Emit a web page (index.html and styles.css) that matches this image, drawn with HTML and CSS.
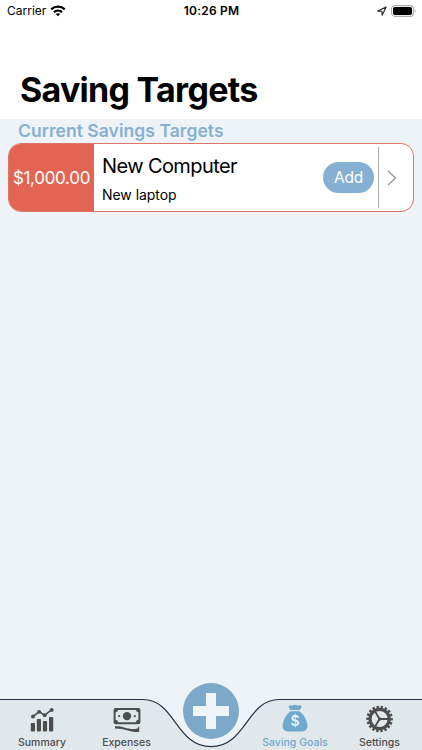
FILE: index.html
```html
<!DOCTYPE html>
<html lang="en">
<head>
  <meta charset="UTF-8">
  <meta name="viewport" content="width=device-width, initial-scale=1.0">
  <title>Saving Targets</title>
  <link rel="stylesheet" href="styles.css">
</head>
<body>
  <div class="app">
    <!-- Status bar -->
    <div class="status-bar">
      <div class="status-left">
        <span class="carrier">Carrier</span>
        <svg class="wifi" width="16" height="12" viewBox="0 0 16 12" fill="none" stroke="#000" stroke-width="2.2">
          <path d="M1.2 4.4C5 .8 11 .8 14.8 4.4"/>
          <path d="M3.9 7.1C6.2 5 9.8 5 12.1 7.1"/>
          <path d="M8 11.3L5.7 9C7 7.9 9 7.9 10.3 9Z" fill="#000" stroke="none"/>
        </svg>
      </div>
      <span class="time">10:26 PM</span>
      <div class="status-right">
        <svg width="10" height="10" viewBox="0 0 10 10" fill="none" stroke="#222" stroke-width="1.1" stroke-linejoin="round">
          <path d="M.8 5.1L9.1 1L5.2 9.2L4.9 5.2Z"/>
        </svg>
        <svg width="25" height="12" viewBox="0 0 25 12">
          <rect x=".6" y=".6" width="21.8" height="10.8" rx="3.2" fill="#fff" stroke="#aaa" stroke-width="1.1"/>
          <rect x="2" y="2" width="19" height="8" rx="1.8"/>
          <path d="M23.6 4.2C25 4.8 25 7.2 23.6 7.8Z" fill="#999"/>
        </svg>
      </div>
    </div>

    <header class="header">
      <h1>Saving Targets</h1>
    </header>

    <main class="content">
      <h2>Current Savings Targets</h2>
      <div class="card">
        <div class="amount"><span>$1,000.00</span></div>
        <div class="info">
          <span class="name">New Computer</span>
          <span class="note">New laptop</span>
        </div>
        <button class="add"><span>Add</span></button>
        <div class="divider"></div>
        <svg class="chevron" width="10" height="16" viewBox="0 0 10 16" fill="none" stroke="#9a9a9a" stroke-width="1.4">
          <path d="M1 1L8.5 8L1 15"/>
        </svg>
      </div>
    </main>

    <!-- Tab bar -->
    <nav class="tabs">
      <svg class="tabs-bg" width="422" height="52" viewBox="0 0 422 52">
        <path d="M-2 1.5H143C175 1.5 176 48.7 211 48.7S247 1.5 279 1.5H424V54H-2Z" fill="#e1e8eb" stroke="#2e3145" stroke-width="1.2"/>
      </svg>
      <a class="tab">
        <svg width="28" height="28" viewBox="0 0 28 28" fill="#4d4d4d">
          <rect x="2.8" y="18" width="4.2" height="8.4" rx=".8"/>
          <rect x="8.8" y="14" width="4.2" height="12.4" rx=".8"/>
          <rect x="14.9" y="16" width="4.2" height="10.4" rx=".8"/>
          <rect x="21" y="12" width="4.2" height="14.4" rx=".8"/>
          <path d="M5 11.6L11.2 6.6L16.7 10.3L23.6 4.7" fill="none" stroke="#4d4d4d" stroke-width="1.6"/>
          <circle cx="5" cy="11.4" r="2"/>
          <circle cx="11.2" cy="6.8" r="1.9"/>
          <circle cx="16.7" cy="10.2" r="1.9"/>
          <circle cx="23.6" cy="4.9" r="2"/>
        </svg>
        <span>Summary</span>
      </a>
      <a class="tab">
        <svg width="28" height="28" viewBox="0 0 28 28" fill="#4d4d4d">
          <rect x="1.6" y="3.9" width="24.8" height="14.4" rx="1" fill="none" stroke="#4d4d4d" stroke-width="2"/>
          <path d="M2 4H5.4Q5.2 7 2 7.4ZM26 4H22.6Q22.8 7 26 7.4ZM2 18V14.8Q5.2 15 5.4 18ZM26 18V14.8Q22.8 15 22.6 18Z"/>
          <circle cx="14" cy="11.1" r="4.2"/>
          <circle cx="6.2" cy="11.1" r="1.1"/>
          <circle cx="21.8" cy="11.1" r="1.1"/>
          <path d="M2 21.3C11 20.3 15 25.6 24.4 23.4L26.2 20.7V27C17 27.6 13 23.3 2 23.4Z"/>
        </svg>
        <span>Expenses</span>
      </a>
      <a class="tab-add">
        <svg width="56" height="56" viewBox="0 0 56 56">
          <circle cx="28" cy="28" r="28" fill="#7ca8c9"/>
          <path d="M23.6 10H32.4Q33 10 33 10.6V23H45.4Q46 23 46 23.6V32.4Q46 33 45.4 33H33V45.4Q33 46 32.4 46H23.6Q23 46 23 45.4V33H10.6Q10 33 10 32.4V23.6Q10 23 10.6 23H23V10.6Q23 10 23.6 10Z" fill="#eff4f8"/>
        </svg>
      </a>
      <a class="tab active">
        <svg width="28" height="28" viewBox="0 0 28 28" fill="#71a8cd">
          <path d="M7.7 .9Q9 -.2 11 .7Q14 -1 17 .7Q19 -.2 20.7 .9Q20.5 3 18.6 5H9.5Q7.5 3 7.7 .9Z"/>
          <path d="M9.5 6.2H18.5C23 9.5 26.4 16 26.4 21Q26.4 26.4 21 26.4H7Q1.6 26.4 1.6 21C1.6 16 5 9.5 9.5 6.2Z"/>
          <text class="dollar" x="14" y="21.2" text-anchor="middle">$</text>
        </svg>
        <span>Saving Goals</span>
      </a>
      <a class="tab">
        <svg width="28" height="28" viewBox="0 0 28 28" fill="none" stroke="#4d4d4d">
          <!-- teeth: 18 dashes round the rim -->
          <circle cx="13.6" cy="14" r="11.9" pathLength="36" stroke-width="2.8" stroke-dasharray="1.15 .85" stroke-dashoffset=".5"/>
          <circle cx="13.6" cy="14" r="9.6" stroke-width="3.2"/>
          <path d="M13.6 14H22.1M13.6 14L9.1 6.4M13.6 14L9.1 21.6" stroke-width="1.9"/>
          <circle cx="13.6" cy="14" r="1.7" fill="#4d4d4d" stroke="none"/>
        </svg>
        <span>Settings</span>
      </a>
    </nav>
  </div>
</body>
</html>
```

FILE: styles.css
```css
* {
  box-sizing: border-box;
}
body {
  margin: 0;
  font-family: Inter, "Liberation Sans", sans-serif;
  color: #000;
}
h1, h2 {
  margin: 0;
}
.app {
  display: flex;
  flex-direction: column;
  width: 422px;
  height: 750px;
  background: #eef3f8;
  overflow: hidden;
}

/* Status bar */
.status-bar {
  display: grid;
  grid-template-columns: 1fr auto 1fr;
  align-items: center;
  height: 22px;
  padding: 0 6px 0 7px;
  background: #fff;
  font-size: 12px;
  line-height: 22px;
}
.status-left, .status-right {
  display: flex;
  align-items: center;
  gap: 4px;
}
.status-right {
  justify-content: flex-end;
}
.time {
  font-weight: 600;
  letter-spacing: 0.2px;
}

.header {
  height: 97px;
  padding: 47px 20px 0;
  background: #fff;
}
.header h1 {
  font-size: 34px;
  line-height: 42px;
  font-weight: 700;
  letter-spacing: -0.73px;
  white-space: nowrap;
}

.content {
  flex: 1;
}
.content h2 {
  height: 24px;
  padding-left: 18px;
  color: #86b0d3;
  font-size: 17.5px;
  line-height: 24px;
  font-weight: 600;
  letter-spacing: 0.05px;
}
.card {
  display: flex;
  align-items: center;
  height: 69px;
  margin: 0 8px;
  border: 1px solid #e07565;
  border-radius: 13px;
  background: #fff;
  overflow: hidden;
}
.amount {
  display: flex;
  align-items: center;
  justify-content: center;
  width: 85px;
  height: 100%;
  background: #e26554;
  color: #fff;
  font-size: 17px;
  letter-spacing: -0.3px;
}
.info {
  display: flex;
  flex: 1;
  flex-direction: column;
  padding: 6px 0 0 8px;
}
.name {
  font-size: 20px;
  line-height: 29px;
  letter-spacing: -0.6px;
}
.note {
  font-size: 14px;
  line-height: 28px;
  letter-spacing: -0.05px;
}
.add {
  width: 51px;
  height: 31px;
  padding: 0;
  border: none;
  border-radius: 16px;
  background: #86b0d3;
  color: #fff;
  font-family: inherit;
  font-size: 15.5px;
  letter-spacing: -0.2px;
}
.divider {
  width: 1px;
  height: 61px;
  margin-left: 4px;
  background: #aaa;
}
.chevron {
  margin: 0 16px 0 8px;
}

/* Tab bar */
.tabs {
  position: relative;
  display: grid;
  grid-template-columns: 84px 85px 84px 84px 85px;
  height: 52px;
}
.tabs-bg {
  position: absolute;
  top: 0;
  left: 0;
}
.tab {
  position: relative;
  display: flex;
  flex-direction: column;
  align-items: center;
  padding-top: 7px;
  color: #4d4d4d;
  font-size: 10.5px;
  line-height: 16px;
  font-weight: 500;
  white-space: nowrap;
}
.tab svg {
  flex: none;
  margin-bottom: 2px;
  overflow: visible;
}
.tab.active {
  color: #71a8cd;
}
.tab-add {
  position: relative;
  display: flex;
  justify-content: center;
  margin-top: -15px;
}
.dollar {
  fill: #e8f0f4;
  font-size: 14px;
  font-weight: 600;
}
```
